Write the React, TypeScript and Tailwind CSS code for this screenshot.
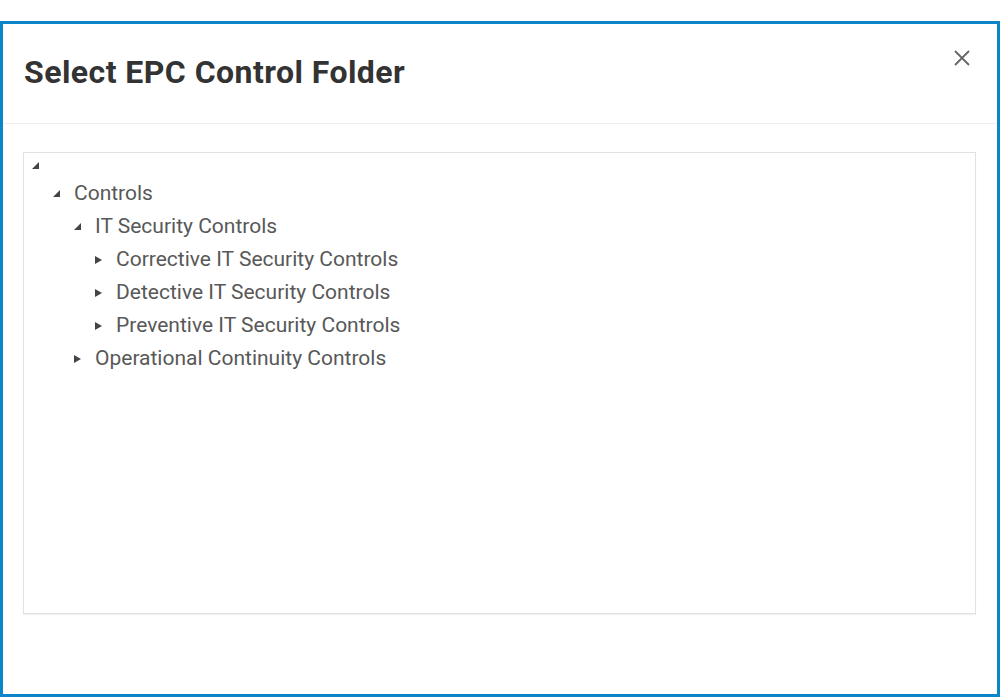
import React from 'react';

type Node = { label: string; level: number; open: boolean };

const nodes: Node[] = [
    { label: 'Controls', level: 1, open: true },
    { label: 'IT Security Controls', level: 2, open: true },
    { label: 'Corrective IT Security Controls', level: 3, open: false },
    { label: 'Detective IT Security Controls', level: 3, open: false },
    { label: 'Preventive IT Security Controls', level: 3, open: false },
    { label: 'Operational Continuity Controls', level: 2, open: false },
];

const Toggle: React.FC<{ open: boolean }> = ({ open }) =>
    open ? (
        <svg width="7" height="7" viewBox="0 0 7 7" className="text-[#444]">
            <polygon points="7,0 7,7 0,7" fill="currentColor" />
        </svg>
    ) : (
        <svg width="7" height="8" viewBox="0 0 7 8" className="text-[#444]">
            <polygon points="0,0 7,4 0,8" fill="currentColor" />
        </svg>
    );

const App: React.FC = () => {
    return (
        <div className="h-[697px] bg-white pt-[21px] font-['Roboto',sans-serif]">
            <div className="h-[676px] border-[3px] border-[#0a85c9] flex flex-col">
                <div className="h-[100px] shrink-0 border-b border-[#ededed] flex items-start justify-between pl-[21px] pr-[27px]">
                    <h1 className="mt-[28px] text-[32px] tracking-[0.45px] font-bold text-[#333] leading-[40px]">Select EPC Control Folder</h1>
                    <button className="mt-[26px] text-[#666]">
                        <svg width="16" height="16" viewBox="0 0 16 16" fill="none" stroke="currentColor" strokeWidth="1.8">
                            <path d="M1 1 L15 15 M15 1 L1 15" />
                        </svg>
                    </button>
                </div>
                <div className="pl-[20px] pr-[21px] pt-[28px]">
                    <div className="h-[462px] border border-[#e2e2e2] shadow-[0_1px_1px_rgba(0,0,0,0.06)] bg-white pl-[8px] pt-[1px]">
                        <div className="h-[23px] flex items-center">
                            <Toggle open />
                        </div>
                        {nodes.map((n) => (
                            <div
                                key={n.label}
                                className="h-[33px] flex items-center text-[21px] text-[#585858]"
                                style={{ paddingLeft: n.level * 21 }}
                            >
                                <span className="w-[21px] shrink-0 flex items-center">
                                    <Toggle open={n.open} />
                                </span>
                                <span>{n.label}</span>
                            </div>
                        ))}
                    </div>
                </div>
            </div>
        </div>
    );
};

export default App;
